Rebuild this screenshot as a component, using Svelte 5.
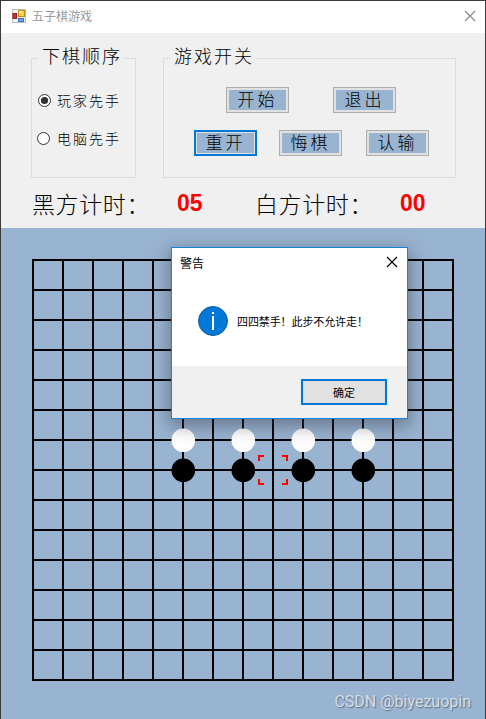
<script>
  const size = 15;
  const cell = 30;
  const lines = Array.from({ length: size }, (_, i) => i * cell);
  const span = (size - 1) * cell;

  let first = "player";
  let seconds = { black: "05", white: "00" };

  const order = [
    { id: "player", label: "玩家先手" },
    { id: "computer", label: "电脑先手" },
  ];

  const white = [[5, 6], [7, 6], [9, 6], [11, 6]];
  const black = [[5, 7], [7, 7], [9, 7], [11, 7]];
  const cursor = [8, 7];

  let dialogOpen = true;
</script>

<style>
  :global(body) {
    margin: 0;
  }
  .window {
    position: relative;
    box-sizing: border-box;
    display: flex;
    flex-direction: column;
    width: 486px;
    height: 719px;
    overflow: hidden;
    border: 1px solid #3b393a;
    border-bottom: 0;
    background: #f0f0f0;
    color: #000;
    font-family: "Noto Sans CJK SC", sans-serif;
  }
  button {
    margin: 0;
    padding: 0;
    font-family: inherit;
    font-weight: inherit;
    color: #000;
  }
  .titlebar {
    display: flex;
    align-items: center;
    box-sizing: border-box;
    height: 32px;
    padding: 0 9px 2px 11px;
    background: #fff;
    color: #999;
    font-size: 12px;
  }
  .titlebar span {
    flex: 1;
    margin-left: 6px;
    line-height: 16px;
  }
  svg {
    display: block;
  }
  .controls {
    display: flex;
    gap: 27px;
    height: 145px;
    padding: 0 0 0 30px;
    box-sizing: border-box;
    font-weight: 300;
  }
  fieldset {
    box-sizing: border-box;
    min-width: 0;
    margin: 15px 0 0;
    padding: 0;
    height: 130px;
    border: 1px solid #dcdcdc;
  }
  .order {
    width: 105px;
  }
  .switches {
    width: 293px;
  }
  legend {
    height: 20px;
    margin-left: 6px;
    padding: 0 1px 0 4px;
    font-size: 18px;
    line-height: 15px;
    letter-spacing: 2px;
    white-space: nowrap;
    box-sizing: border-box;
    width: 86px;
  }
  .radio {
    display: flex;
    align-items: center;
    height: 20px;
    margin: 22px 0 0 6px;
    font-size: 14px;
    letter-spacing: 2px;
    white-space: nowrap;
  }
  .radio + .radio {
    margin: 18px 0 0 5px;
  }
  .radio svg {
    margin-right: 6px;
  }
  .radio + .radio svg {
    margin-right: 7px;
  }
  .row {
    display: flex;
    gap: 44px;
    padding: 19px 0 0 62px;
  }
  .row + .row {
    gap: 22px;
    padding: 17px 0 0 30px;
  }
  .row + .row .btn:last-child {
    margin-left: 2px;
  }
  .btn {
    box-sizing: border-box;
    width: 63px;
    height: 26px;
    border: 1px solid #adadad;
    box-shadow: inset 0 0 0 2px #e1e1e1;
    background: #99b4d1;
    font-size: 17px;
    line-height: 20px;
    letter-spacing: 3px;
    padding-bottom: 2px;
    border-radius: 0;
    white-space: nowrap;
  }
  .btn.focused {
    border: 2px solid #0078d7;
    box-shadow: inset 0 0 0 1px #e1e1e1;
  }
  .timers {
    display: flex;
    align-items: center;
    height: 50px;
    padding: 0 0 1px 31px;
    box-sizing: border-box;
    font-size: 23px;
    font-weight: 300;
    white-space: nowrap;
  }
  .timers span {
    width: 145px;
    letter-spacing: 0.6px;
  }
  .timers b {
    width: 78px;
    padding-top: 2px;
    color: #f00;
    font: bold 23px "Liberation Sans", sans-serif;
  }
  .board {
    flex: 1;
    background: #99b4d1;
  }
  .dialog {
    position: absolute;
    left: 170px;
    top: 246px;
    box-sizing: border-box;
    display: flex;
    flex-direction: column;
    width: 237px;
    height: 172px;
    border: 1px solid #1883d7;
    background: #fff;
    box-shadow: 0 5px 16px 2px rgba(60, 60, 75, 0.5);
    font-size: 12px;
  }
  .head {
    display: flex;
    justify-content: space-between;
    align-items: center;
    height: 28px;
    padding: 0 9px 0 8px;
  }
  .body {
    flex: 1;
    display: flex;
    align-items: center;
    gap: 9px;
    padding: 0 0 0 26px;
    font-size: 11px;
    letter-spacing: -0.1px;
    white-space: nowrap;
  }
  .foot {
    display: flex;
    justify-content: flex-end;
    height: 52px;
    padding: 13px 20px 0 0;
    box-sizing: border-box;
    background: #f0f0f0;
  }
  .ok {
    width: 86px;
    height: 26px;
    box-sizing: border-box;
    border: 2px solid #0078d7;
    background: #e1e1e1;
    font-size: 11px;
    line-height: 20px;
    border-radius: 0;
  }
  .mark {
    position: absolute;
    right: 14px;
    bottom: 7px;
    color: #d5dde6;
    font: 16px/20px Roboto, sans-serif;
    text-shadow: 1px 1px 1px #5f7084;
  }
</style>

<div class="window">
  <div class="titlebar">
    <svg width="14" height="14" viewBox="0 0 14 14">
      <rect x="0.5" y="0.5" width="13" height="13" fill="#f4f4f6" stroke="#b9b9bd" />
      <rect x="6.5" y="1.5" width="6" height="6" fill="#ffd34e" stroke="#c38a16" />
      <rect x="7" y="2" width="3" height="2" fill="#ffeeb0" />
      <rect x="1" y="4.5" width="3.5" height="5" fill="#cf3434" stroke="#971b1b" />
      <rect x="6.5" y="9.5" width="5" height="3" fill="#6fa5f5" stroke="#3b70cc" />
    </svg>
    <span>五子棋游戏</span>
    <svg width="12" height="12" viewBox="0 0 12 12">
      <path d="M1 1L11 11M11 1L1 11" stroke="#888" stroke-width="1.1" />
    </svg>
  </div>

  <div class="controls">
    <fieldset class="order">
      <legend>下棋顺序</legend>
      {#each order as item}
        <div class="radio" on:click={() => (first = item.id)}>
          <svg width="13" height="13" viewBox="0 0 13 13">
            <circle cx="6.5" cy="6.5" r="6" fill="#fff" stroke="#333" />
            {#if first === item.id}
              <circle cx="6.5" cy="6.5" r="3.6" fill="#333" />
            {/if}
          </svg>
          {item.label}
        </div>
      {/each}
    </fieldset>
    <fieldset class="switches">
      <legend>游戏开关</legend>
      <div class="row">
        <button class="btn">开始</button>
        <button class="btn">退出</button>
      </div>
      <div class="row">
        <button class="btn focused">重开</button>
        <button class="btn">悔棋</button>
        <button class="btn">认输</button>
      </div>
    </fieldset>
  </div>

  <div class="timers">
    <span>黑方计时：</span><b>{seconds.black}</b>
    <span>白方计时：</span><b>{seconds.white}</b>
  </div>

  <div class="board">
    <svg width="484" height="491" viewBox="-32 -32 484 491">
      <g stroke="#000" stroke-width="2">
        {#each lines as p}
          <path d="M{p} 0V{span}M-1 {p}H{span + 1}" />
        {/each}
      </g>
      {#each white as [x, y]}
        <circle cx={x * cell + 0.3} cy={y * cell + 0.3} r="11.8" fill="#fff" />
      {/each}
      {#each black as [x, y]}
        <circle cx={x * cell + 0.3} cy={y * cell + 0.3} r="11.8" />
      {/each}
      <path
        transform="translate({cursor[0] * cell} {cursor[1] * cell})"
        d="M-14 -9V-14H-9M9 -14H14V-9M14 9V14H9M-9 14H-14V9"
        fill="none"
        stroke="#f00"
        stroke-width="2"
      />
    </svg>
  </div>

  {#if dialogOpen}
    <div class="dialog">
      <div class="head">
        警告
        <svg width="12" height="12" viewBox="0 0 12 12" on:click={() => (dialogOpen = false)}>
          <path d="M1 1L11 11M11 1L1 11" stroke="#000" stroke-width="1.2" />
        </svg>
      </div>
      <div class="body">
        <svg width="30" height="30" viewBox="0 0 30 30">
          <circle cx="15" cy="15" r="14.5" fill="#0078d7" stroke="#0f5c9c" />
          <path d="M14 6h2v2h-2zM14 10h2v14h-2z" fill="#fff" />
        </svg>
        <span>四四禁手！此步不允许走！</span>
      </div>
      <div class="foot">
        <button class="ok" on:click={() => (dialogOpen = false)}>确定</button>
      </div>
    </div>
  {/if}

  <div class="mark">CSDN @biyezuopin</div>
</div>
